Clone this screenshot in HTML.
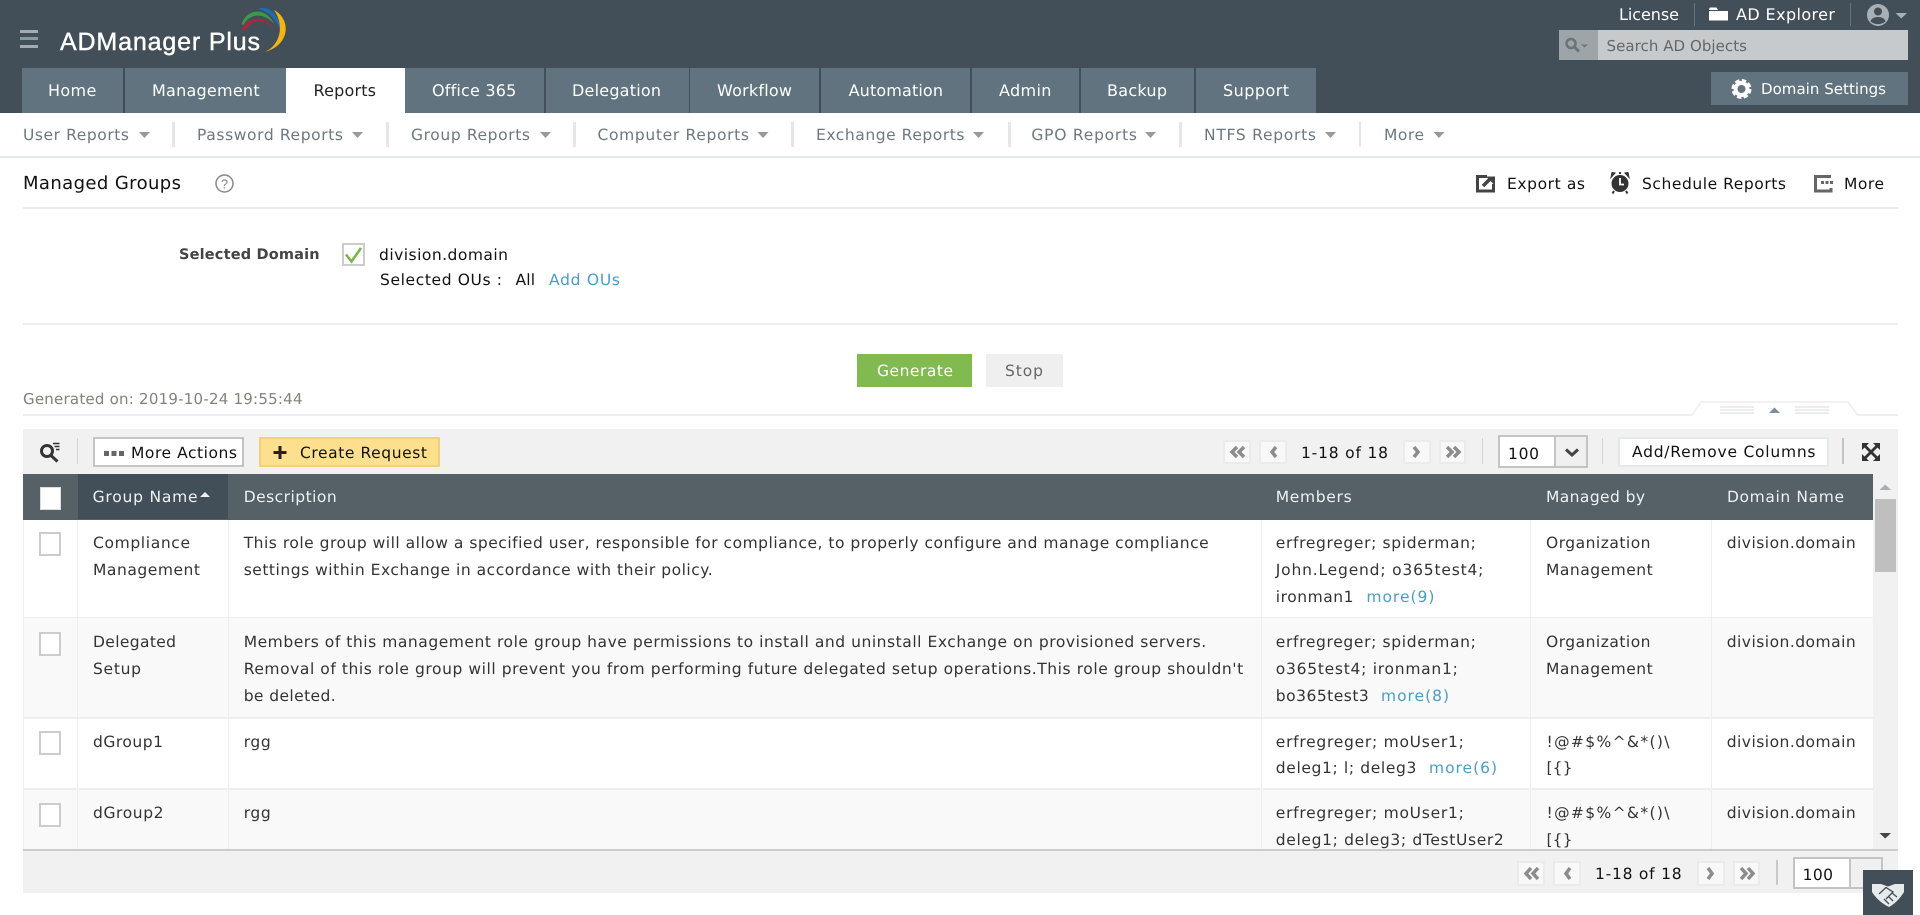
<!DOCTYPE html>
<html lang="en"><head><meta charset="utf-8"><title>Managed Groups - ADManager Plus</title>
<style>
html,body{margin:0;padding:0;background:#fff}
#p{position:relative;width:1920px;height:915px;overflow:hidden;background:#fff;font-family:"DejaVu Sans","Liberation Sans",sans-serif;font-size:15.5px;color:#333;text-rendering:geometricPrecision}
.b{position:absolute;box-sizing:border-box}
.t{position:absolute;white-space:nowrap;line-height:20px;height:20px}
.w{color:#fff;font-size:16px}
.n{color:#6c7880;font-size:15.5px}
.k{color:#111}
.l{color:#4a9dc9}
.h{color:#eef1f2;font-size:15.5px}
.s{background:#e6e6e6;width:3px;top:122px;height:25px}
.tab{background:#60737f;top:68px;height:45px}
.pg{background:#f8f8f8;border:2px solid #ebebeb}
.cb{background:#fff;border:2px solid #ccc;width:22px;height:24px;left:39px}
.v{background:#eee;width:1px}
svg{position:absolute;left:0;top:0}
</style></head><body><div id="p">
<div class="b" style="left:0;top:0;width:1920px;height:113px;background:#434f58"></div>
<div class="b tab" style="left:22px;width:101px"></div>
<div class="b tab" style="left:124.5px;width:161.5px"></div>
<div class="b" style="left:286px;top:68px;width:119px;height:46px;background:#fff"></div>
<div class="b tab" style="left:405px;width:139px"></div>
<div class="b tab" style="left:546px;width:142.5px"></div>
<div class="b tab" style="left:690px;width:129px"></div>
<div class="b tab" style="left:820.5px;width:149.5px"></div>
<div class="b tab" style="left:971.5px;width:107.5px"></div>
<div class="b tab" style="left:1081px;width:113px"></div>
<div class="b tab" style="left:1195.5px;width:120px"></div>
<span class="t w" style="left:48px;top:81px;width:48.3px">Home</span>
<span class="t w" style="left:152px;top:81px;width:107.6px">Management</span>
<span class="t" style="left:313.5px;top:81px;width:62.5px;font-size:16px;color:#222">Reports</span>
<span class="t w" style="left:432px;top:81px;width:84px">Office 365</span>
<span class="t w" style="left:572px;top:81px;width:89px">Delegation</span>
<span class="t w" style="left:717px;top:81px;width:75px">Workflow</span>
<span class="t w" style="left:848.6px;top:81px;width:94.4px">Automation</span>
<span class="t w" style="left:999px;top:81px;width:52.4px">Admin</span>
<span class="t w" style="left:1107px;top:81px;width:60px">Backup</span>
<span class="t w" style="left:1223px;top:81px;width:66px">Support</span>
<div class="b" style="left:20px;top:30px;width:18px;height:3px;background:#a3abaf"></div>
<div class="b" style="left:20px;top:37px;width:18px;height:3px;background:#8d979c"></div>
<div class="b" style="left:20px;top:45px;width:18px;height:3px;background:#a3abaf"></div>
<span class="t" style="left:60px;top:29px;width:200px;font-family:'Liberation Sans',sans-serif;font-size:25px;line-height:26px;height:26px;color:#fff;-webkit-text-stroke:.4px #fff">ADManager Plus</span>
<span class="t w" style="left:1619px;top:5px;width:60px">License</span>
<div class="b" style="left:1694px;top:3px;width:1px;height:23px;background:#67737b"></div>
<span class="t w" style="left:1736px;top:5px;width:99px">AD Explorer</span>
<div class="b" style="left:1850px;top:3px;width:1px;height:23px;background:#67737b"></div>
<div class="b" style="left:1559px;top:30px;width:39px;height:30px;background:#9da5a9"></div>
<div class="b" style="left:1598px;top:30px;width:310px;height:30px;background:#c6cacd"></div>
<span class="t" style="left:1606.5px;top:36px;width:140.5px;color:#666;font-size:15px">Search AD Objects</span>
<div class="b" style="left:1711px;top:72px;width:197px;height:33px;background:#60737f"></div>
<span class="t" style="left:1761px;top:79px;width:125px;color:#fff;font-size:15px">Domain Settings</span>

<span class="t n" style="left:23px;top:125px;width:106px">User Reports</span><div class="b s" style="left:172px"></div>
<span class="t n" style="left:197px;top:125px;width:146px">Password Reports</span><div class="b s" style="left:386px"></div>
<span class="t n" style="left:411px;top:125px;width:119px">Group Reports</span><div class="b s" style="left:573px"></div>
<span class="t n" style="left:597.5px;top:125px;width:151.5px">Computer Reports</span><div class="b s" style="left:791px"></div>
<span class="t n" style="left:816px;top:125px;width:148.5px">Exchange Reports</span><div class="b s" style="left:1007.5px"></div>
<span class="t n" style="left:1031.4px;top:125px;width:105.6px">GPO Reports</span><div class="b s" style="left:1179px"></div>
<span class="t n" style="left:1204px;top:125px;width:112px">NTFS Reports</span><div class="b s" style="left:1359px;width:2px"></div>
<span class="t n" style="left:1384px;top:125px;width:40px">More</span>
<div class="b" style="left:0;top:156px;width:1920px;height:2px;background:#e4e9e9"></div>

<span class="t k" style="left:23px;top:174px;width:158px;font-size:18px">Managed Groups</span>
<span class="t k" style="left:1507px;top:174px;width:78px">Export as</span>
<span class="t k" style="left:1642px;top:174px;width:144px">Schedule Reports</span>
<span class="t k" style="left:1844px;top:174px;width:40px">More</span>
<div class="b" style="left:23px;top:207px;width:1875px;height:2px;background:#e9e9e9"></div>

<span class="t" style="left:179px;top:245px;width:140.6px;font-weight:bold;color:#444;font-size:14.5px">Selected Domain</span>
<div class="b" style="left:342px;top:243px;width:23px;height:23px;border:2px solid #ccc;background:#fff"></div>
<span class="t k" style="left:379px;top:245px;width:129px">division.domain</span>
<span class="t k" style="left:380px;top:270px;width:122px">Selected OUs :</span>
<span class="t k" style="left:515.5px;top:270px;width:19.5px">All</span>
<span class="t l" style="left:549px;top:270px;width:71px">Add OUs</span>
<div class="b" style="left:23px;top:323px;width:1875px;height:2px;background:#eee"></div>

<div class="b" style="left:857px;top:354px;width:115px;height:33px;background:#82ba52"></div>
<span class="t" style="left:877px;top:361px;width:76px;color:#fff">Generate</span>
<div class="b" style="left:986px;top:354px;width:77px;height:33px;background:#efefef"></div>
<span class="t" style="left:1005px;top:361px;width:38px;color:#666">Stop</span>
<span class="t" style="left:23px;top:389px;width:279.5px;color:#877f78;font-size:15px">Generated on: 2019-10-24 19:55:44</span>
<div class="b" style="left:23px;top:414px;width:1669px;height:2px;background:#eee"></div>
<div class="b" style="left:1857px;top:414px;width:41px;height:2px;background:#eee"></div>

<div class="b" style="left:23px;top:429px;width:1875px;height:45px;background:#f1f1f1"></div>
<div class="b" style="left:77px;top:438px;width:1px;height:26px;background:#d4d4d4"></div>
<div class="b" style="left:93px;top:437px;width:151px;height:30px;background:#fff;border:2px solid #c4c4c4"></div>
<span class="t k" style="left:131px;top:443px;width:106px">More Actions</span>
<div class="b" style="left:259px;top:437px;width:181px;height:30px;background:#fde08e;border:2px solid #f3cf78"></div>
<span class="t k" style="left:300px;top:443px;width:127px">Create Request</span>

<div class="b pg" style="left:1223px;top:440px;width:28px;height:24px"></div>
<div class="b pg" style="left:1259px;top:440px;width:28px;height:24px"></div>
<span class="t k" style="left:1301px;top:443px;width:87px">1-18 of 18</span>
<div class="b pg" style="left:1403px;top:440px;width:28px;height:24px"></div>
<div class="b pg" style="left:1439px;top:440px;width:27px;height:24px"></div>
<div class="b" style="left:1482px;top:438px;width:1px;height:26px;background:#d4d4d4"></div>
<div class="b" style="left:1498px;top:435px;width:90px;height:33px;background:#f0f0f0;border:2px solid #c4c4c4"></div>
<div class="b" style="left:1500px;top:437px;width:56px;height:29px;background:#fff;border-right:2px solid #c4c4c4"></div>
<span class="t k" style="left:1508px;top:444px;width:31px">100</span>
<div class="b" style="left:1602px;top:438px;width:1px;height:26px;background:#d4d4d4"></div>
<div class="b" style="left:1618px;top:437px;width:211px;height:30px;background:#fff;border:2px solid #e3e8e8"></div>
<span class="t k" style="left:1632px;top:442px;width:183.5px">Add/Remove Columns</span>
<div class="b" style="left:1842px;top:438px;width:2px;height:26px;background:#c4c4c4"></div>

<div class="b" style="left:23px;top:474px;width:1850px;height:46px;background:#566067"></div>
<div class="b" style="left:78px;top:474px;width:150px;height:45px;background:#424f58"></div>
<div class="b" style="left:40px;top:487px;width:21px;height:23px;background:#fff;border:1px solid #ddd"></div>
<span class="t h" style="left:92.6px;top:487px;width:105px">Group Name</span>
<span class="t h" style="left:243.7px;top:487px;width:93px">Description</span>
<span class="t h" style="left:1275.7px;top:487px;width:76px">Members</span>
<span class="t h" style="left:1546px;top:487px;width:99px">Managed by</span>
<span class="t h" style="left:1727px;top:487px;width:117px">Domain Name</span>

<div class="b" style="left:1873px;top:474px;width:25px;height:375px;background:#f1f1f1"></div>
<div class="b" style="left:1875px;top:499px;width:21px;height:73px;background:#bfbfbf"></div>

<div class="b" style="left:23px;top:520px;width:1850px;height:329px;overflow:hidden;background:#fff">
<div class="b" style="left:0;top:97px;width:1850px;height:1px;background:#eee"></div>
<div class="b" style="left:0;top:98px;width:1850px;height:99px;background:#f9f9f9"></div>
<div class="b" style="left:0;top:197px;width:1850px;height:2px;background:#eee"></div>
<div class="b" style="left:0;top:268px;width:1850px;height:2px;background:#eee"></div>
<div class="b" style="left:0;top:270px;width:1850px;height:59px;background:#f9f9f9"></div>
<div class="b v" style="left:0;top:0;height:329px"></div>
<div class="b v" style="left:54px;top:0;height:329px"></div>
<div class="b v" style="left:205px;top:0;height:329px"></div>
<div class="b v" style="left:1238px;top:0;height:329px"></div>
<div class="b v" style="left:1507px;top:0;height:329px"></div>
<div class="b v" style="left:1688px;top:0;height:329px"></div>
<div class="b cb" style="left:16px;top:12px"></div>
<div class="b cb" style="left:16px;top:112px"></div>
<div class="b cb" style="left:16px;top:211px"></div>
<div class="b cb" style="left:16px;top:283px"></div>

<span class="t" style="left:70px;top:13px;width:97px">Compliance</span>
<span class="t" style="left:70px;top:40px;width:107px">Management</span>
<span class="t" style="left:220.7px;top:13px;width:965px">This role group will allow a specified user, responsible for compliance, to properly configure and manage compliance</span>
<span class="t" style="left:220.7px;top:40px;width:469px">settings within Exchange in accordance with their policy.</span>
<span class="t" style="left:1252.8px;top:13px;width:200px">erfregreger; spiderman;</span>
<span class="t" style="left:1252.8px;top:40px;width:207.6px">John.Legend; o365test4;</span>
<span class="t" style="left:1252.8px;top:67px;width:77.7px">ironman1</span>
<span class="t l" style="left:1343.4px;top:67px;width:68px">more(9)</span>
<span class="t" style="left:1523px;top:13px;width:104.5px">Organization</span>
<span class="t" style="left:1523px;top:40px;width:106.7px">Management</span>
<span class="t" style="left:1703.7px;top:13px;width:129px">division.domain</span>

<span class="t" style="left:70px;top:112px;width:83px">Delegated</span>
<span class="t" style="left:70px;top:139px;width:48px">Setup</span>
<span class="t" style="left:220.7px;top:112px;width:962.5px">Members of this management role group have permissions to install and uninstall Exchange on provisioned servers.</span>
<span class="t" style="left:220.7px;top:139px;width:999.5px">Removal of this role group will prevent you from performing future delegated setup operations.This role group shouldn't</span>
<span class="t" style="left:220.7px;top:166px;width:92px">be deleted.</span>
<span class="t" style="left:1252.8px;top:112px;width:200px">erfregreger; spiderman;</span>
<span class="t" style="left:1252.8px;top:139px;width:182px">o365test4; ironman1;</span>
<span class="t" style="left:1252.8px;top:166px;width:93px">bo365test3</span>
<span class="t l" style="left:1358px;top:166px;width:68px">more(8)</span>
<span class="t" style="left:1523px;top:112px;width:104.5px">Organization</span>
<span class="t" style="left:1523px;top:139px;width:106.7px">Management</span>
<span class="t" style="left:1703.7px;top:112px;width:129px">division.domain</span>

<span class="t" style="left:70px;top:212px;width:70px">dGroup1</span>
<span class="t" style="left:220.7px;top:212px;width:27px">rgg</span>
<span class="t" style="left:1252.8px;top:212px;width:188px">erfregreger; moUser1;</span>
<span class="t" style="left:1252.8px;top:238px;width:140.6px">deleg1; l; deleg3</span>
<span class="t l" style="left:1406px;top:238px;width:68px">more(6)</span>
<span class="t" style="left:1523.5px;top:212px;width:123px">!@#$%^&amp;*()\</span>
<span class="t" style="left:1523.5px;top:238px;width:26px">[{}</span>
<span class="t" style="left:1703.7px;top:212px;width:129px">division.domain</span>

<span class="t" style="left:70px;top:283px;width:70.5px">dGroup2</span>
<span class="t" style="left:220.7px;top:283px;width:27px">rgg</span>
<span class="t" style="left:1252.8px;top:283px;width:188px">erfregreger; moUser1;</span>
<span class="t" style="left:1252.8px;top:310px;width:228px">deleg1; deleg3; dTestUser2</span>
<span class="t" style="left:1523.5px;top:283px;width:123px">!@#$%^&amp;*()\</span>
<span class="t" style="left:1523.5px;top:310px;width:26px">[{}</span>
<span class="t" style="left:1703.7px;top:283px;width:129px">division.domain</span>
</div>

<div class="b" style="left:23px;top:849px;width:1875px;height:2px;background:#ccc"></div>
<div class="b" style="left:23px;top:851px;width:1875px;height:42px;background:#f1f1f1"></div>
<div class="b pg" style="left:1517px;top:861px;width:28px;height:25px"></div>
<div class="b pg" style="left:1553px;top:861px;width:28px;height:25px"></div>
<span class="t k" style="left:1595px;top:864px;width:86.6px">1-18 of 18</span>
<div class="b pg" style="left:1697px;top:861px;width:28px;height:25px"></div>
<div class="b pg" style="left:1733px;top:861px;width:27px;height:25px"></div>
<div class="b" style="left:1776px;top:860px;width:2px;height:25px;background:#c8c8c8"></div>
<div class="b" style="left:1793px;top:857px;width:90px;height:32px;background:#f0f0f0;border:2px solid #c4c4c4"></div>
<div class="b" style="left:1795px;top:859px;width:56px;height:28px;background:#fff;border-right:2px solid #c4c4c4"></div>
<span class="t k" style="left:1802.6px;top:865px;width:30.4px">100</span>

<svg width="1920" height="915" viewBox="0 0 1920 915" fill="none">
<!-- logo arcs -->
<path d="M242 30C246 19 262 13 273.500 28C262 18 250 20 245 31Z" fill="#b0243c"/>
<path d="M241.500 24C247 9 265 6 274.500 24C263 12 250 13 243.500 25Z" fill="#3a9a48"/>
<path d="M258 9C268 5 279 13 281.500 33C276 18 268 11 258 9Z" fill="#1c6fb4"/>
<path d="M274 10C290 18 292 44 265 52C280 45 285 26 274 10Z" fill="#f3b512"/>
<!-- folder -->
<path d="M1709 9V20.500H1728V10H1718L1716.500 7.500H1710Z" fill="#fff"/>
<path d="M1709 10.500H1728" stroke="#434f58" stroke-width="1"/>
<!-- user -->
<circle cx="1878" cy="15" r="11" fill="#a9b0b5"/>
<circle cx="1878" cy="11.500" r="4" fill="#434f58"/>
<path d="M1870.500 21.500C1871.500 15.500 1884.500 15.500 1885.500 21.500C1881 25 1875 25 1870.500 21.500Z" fill="#434f58"/>
<path d="M1895.500 13H1907L1901.200 18.500Z" fill="#a9b0b5"/>
<!-- search box icon -->
<circle cx="1571" cy="43.500" r="4.500" stroke="#69747b" stroke-width="2.500"/>
<path d="M1574.500 47L1579 51.500" stroke="#69747b" stroke-width="3"/>
<path d="M1581 44.500H1588L1584.500 47.500Z" fill="#69747b"/>
<!-- gear -->
<circle cx="1741.500" cy="89" r="6" stroke="#fff" stroke-width="4"/>
<circle cx="1741.500" cy="89" r="8.500" stroke="#fff" stroke-width="3" stroke-dasharray="4.400 2.270"/>
<!-- subnav carets -->
<g fill="#999">
<path d="M139 132H150L144.500 138Z"/><path d="M352 132H363L357.500 138Z"/><path d="M540 132H551L545.500 138Z"/>
<path d="M757.500 132H768.500L763 138Z"/><path d="M973 132H984L978.500 138Z"/><path d="M1145 132H1156L1150.500 138Z"/>
<path d="M1325 132H1336L1330.500 138Z"/><path d="M1433.500 132H1444.500L1439 138Z"/>
</g>
<!-- help -->
<circle cx="224.500" cy="183.500" r="8.500" stroke="#888" stroke-width="1.500"/>
<text x="224.500" y="188.500" text-anchor="middle" font-family="Liberation Sans, sans-serif" font-size="13" fill="#888">?</text>
<!-- export -->
<path d="M1487 176.500H1477.500V191H1493.500V184" stroke="#444" stroke-width="3"/>
<path d="M1483 186L1489.500 179.500" stroke="#444" stroke-width="3.500"/>
<path d="M1486 176.500H1495V185.500Z" fill="#444"/>
<!-- alarm clock -->
<circle cx="1620" cy="183.500" r="8.500" fill="#333"/>
<path d="M1611 177.500L1615 173L1612 172.500ZM1629 177.500L1625 173L1628 172.500Z" fill="#333" stroke="#333"/>
<path d="M1620 172V174M1614 191L1612.500 193.500M1626 191L1627.500 193.500" stroke="#333" stroke-width="2"/>
<path d="M1620 178V184.500H1624" stroke="#fff" stroke-width="1.800"/>
<!-- more icon -->
<path d="M1831 176.500H1815.500V191H1831V188" stroke="#666" stroke-width="3"/>
<path d="M1821 181h3v3h-3zM1825.500 181h3v3h-3zM1830 181h3v3h-3z" fill="#666"/>
<!-- checkmark -->
<path d="M346 254.500L351.500 261.500L361 248" stroke="#7ab648" stroke-width="2.600"/>
<!-- collapse tab -->
<path d="M1692 415L1701 402H1848L1857.500 415" stroke="#eee" stroke-width="1.500"/>
<g fill="#b8bebe">
<path d="M1720 406.500h34v1h-34zM1720 409.500h34v1h-34zM1720 412.500h34v1h-34zM1795 406.500h34v1h-34zM1795 409.500h34v1h-34zM1795 412.500h34v1h-34z" opacity=".55"/>
</g>
<path d="M1769 413H1780L1774.500 407.500Z" fill="#7d8f9b"/>
<!-- filter search -->
<circle cx="47" cy="451" r="5.500" stroke="#333" stroke-width="3"/>
<path d="M51 455.500L57.500 461.500" stroke="#333" stroke-width="3"/>
<path d="M53 443.500H59.500M54.500 446.500H59.500M56 449.500H59.500" stroke="#333" stroke-width="1.500"/>
<!-- more actions dots -->
<path d="M104 451h5v5h-5zM111.500 451h5v5h-5zM119 451h5v5h-5z" fill="#666"/>
<!-- plus -->
<path d="M280 446V459M273.500 452.500H286.500" stroke="#222" stroke-width="3"/>
<!-- pager chevrons -->
<g stroke="#8c8c8c" stroke-width="3.500">
<path d="M1237 447L1232 452L1237 457M1244 447L1239 452L1244 457"/>
<path d="M1276 447L1272 452L1276 457"/>
<path d="M1414 447L1418 452L1414 457"/>
<path d="M1447 447L1452 452L1447 457M1454 447L1459 452L1454 457"/>
<path d="M1531 868L1526 873.500L1531 879M1538 868L1533 873.500L1538 879"/>
<path d="M1570 868L1566 873.500L1570 879"/>
<path d="M1708 868L1712 873.500L1708 879"/>
<path d="M1741 868L1746 873.500L1741 879M1748 868L1753 873.500L1748 879"/>
</g>
<path d="M1566 449.500L1572 455L1578 449.500" stroke="#444" stroke-width="3"/>
<!-- expand -->
<path d="M1862 443H1869L1866.500 445.500L1871 450L1875.500 445.500L1873 443H1880V450L1877.500 447.500L1873 452L1877.500 456.500L1880 454V461H1873L1875.500 458.500L1871 454L1866.500 458.500L1869 461H1862V454L1864.500 456.500L1869 452L1864.500 447.500L1862 450Z" fill="#333"/>
<!-- sort -->
<path d="M200 497H210L205 492Z" fill="#eef1f2"/>
<!-- scroll arrows -->
<path d="M1879.500 490H1891L1885.200 484.500Z" fill="#aab0b0"/>
<path d="M1879.500 833H1891L1885.200 838.500Z" fill="#444"/>
<!-- handshake box -->
<rect x="1863" y="870" width="50" height="45" fill="#434f58"/>
<path d="M1872 884H1881L1888 886.500L1895 884H1904V892C1900 898 1896 903 1889 907C1881 903 1876 898 1872 892Z" fill="#e8ebec"/>
<path d="M1879 894L1886 887.500L1893 892L1886 899M1884 899L1889 904M1888 896L1893 901M1892 893L1897 897" stroke="#434f58" stroke-width="1.300"/>
</svg>
</div>
<script>
(function(){
var a=document.querySelectorAll('.t');
for(var i=0;i<a.length;i++){
 var e=a[i],w=parseFloat(e.style.width),n=e.textContent.length;
 if(!w||n<2)continue;
 var r=document.createRange();r.selectNodeContents(e);
 var c=r.getBoundingClientRect().width;
 e.style.letterSpacing=((w-c)/(n-1)).toFixed(3)+'px';
}
})();
</script>
</body></html>
